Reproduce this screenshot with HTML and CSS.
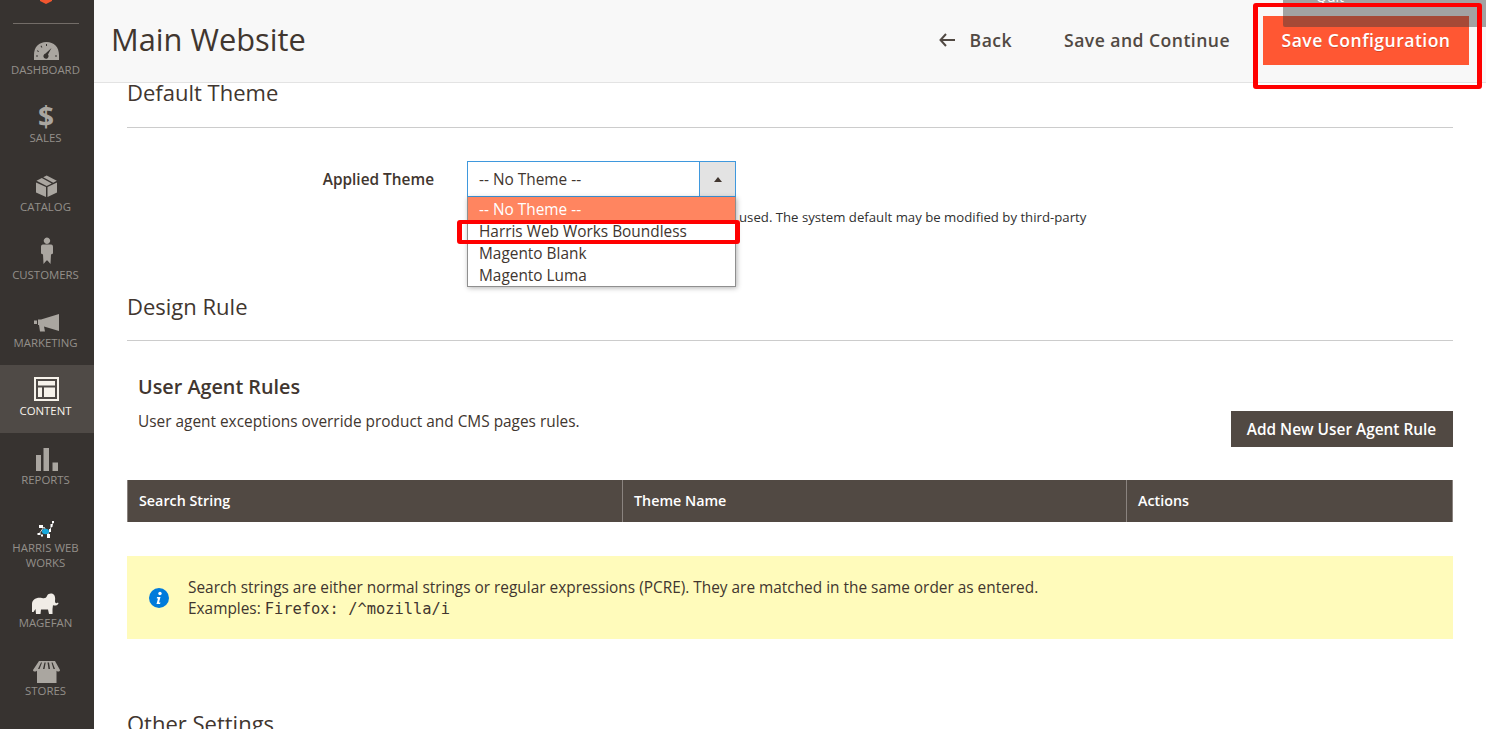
FILE: index.html
```html
<!DOCTYPE html>
<html lang="en">
<head>
<meta charset="utf-8">
<title>Main Website</title>
<link rel="stylesheet" href="styles.css">
</head>
<body>
<div class="app">
  <nav class="sidebar">
    <div class="logo-area">
      <svg class="logo" viewBox="0 0 12 4" width="12" height="4"><path d="M0 0H12V1L6 4L0 1Z" fill="#f1562f"/></svg>
    </div>
    <a class="nav-item">
      <svg class="nav-icon" viewBox="0 0 30 30"><path fill-rule="evenodd" d="M3 29V24C3 16 8 11 15.5 11S28 16 28 24V29ZM20.5 17L17 23.5A2.6 2.6 0 1 1 14.5 22.6ZM15 13V15H16V13ZM9.5 15L10.6 16.7L11.4 16.2L10.3 14.5ZM5.8 20L7.5 21L8 20.2L6.3 19.2ZM5 24.5V25.5H7V24.5ZM24 24.5V25.5H26V24.5Z"/></svg>
      <span>DASHBOARD</span>
    </a>
    <a class="nav-item">
      <svg class="nav-icon" viewBox="0 0 30 30"><text x="15" y="28" text-anchor="middle" class="dollar">$</text></svg>
      <span>SALES</span>
    </a>
    <a class="nav-item">
      <svg class="nav-icon" viewBox="0 0 30 30"><path d="M15 19V29L5 24.500V14.500ZM16.500 19L26 14.500V24.500L16.500 29ZM5.500 12.800L10.800 10L20.800 15.400L15.700 18ZM12.200 9.300L15.700 7.500L25.800 12.800L22.200 14.700Z"/></svg>
      <span>CATALOG</span>
    </a>
    <a class="nav-item">
      <svg class="nav-icon" viewBox="0 0 30 30"><path d="M16 1.500A3.200 3.200 0 1 1 15.900 1.500ZM12 8.500H20C21.500 8.500 22 9.500 22 11V17.500L20 18.500L19.500 28L16.500 24.500L15.500 24.500L12.500 28L12 18.500L10 17.500V11C10 9.500 10.500 8.500 12 8.500Z"/></svg>
      <span>CUSTOMERS</span>
    </a>
    <a class="nav-item">
      <svg class="nav-icon" viewBox="0 0 30 30"><path d="M28 10V27L13 22.500L14 27.500H9L8 21H7V15.500H10ZM3 16.500H6V20H3Z"/></svg>
      <span>MARKETING</span>
    </a>
    <a class="nav-item nav-item-active">
      <svg class="nav-icon" viewBox="0 0 30 30"><path fill-rule="evenodd" d="M3 5H28V29H3ZM5 7V27H26V7ZM7 9H24V13.500H7ZM7 15.500H11V25H7ZM13 15.500H24V25H13Z"/></svg>
      <span>CONTENT</span>
    </a>
    <a class="nav-item">
      <svg class="nav-icon" viewBox="0 0 30 30"><path d="M5 14H10V30H5ZM12.500 7H18V30H12.500ZM21.500 21.500H27V30H21.500Z"/></svg>
      <span>REPORTS</span>
    </a>
    <a class="nav-item nav-item-tall">
      <svg class="nav-icon" viewBox="0 0 30 30"><path class="hw-line" d="M8 25L13 18L17 25L22 14"/><ellipse class="hw-blue" cx="14.500" cy="22.500" rx="3.500" ry="2.800"/><path class="hw-white" d="M21 12h2v2h-2zM19.500 15h2v3h-2zM8 16h4v3H8zM6.500 24h3v2h-3zM10 25.500h2v2h-2zM16 25h3v4h-3zM18 20h2v3h-2z"/></svg>
      <span>HARRIS WEB WORKS</span>
    </a>
    <a class="nav-item nav-item-short">
      <svg class="nav-icon nav-icon-bright" viewBox="0 0 30 30"><path d="M1 20C1 16 5 13 11 14C14 14.500 15 14 16 12C17 9.500 20 9 22 10C24 11 24.500 14 24 17C24 19 25 20 27 18.500L27.500 19.500C26 22 22.500 22 22 21L21.500 25V30H18L17 25.500H10L9.500 30H5L4.500 25L2.500 28H1Z"/></svg>
      <span>MAGEFAN</span>
    </a>
    <a class="nav-item">
      <svg class="nav-icon" viewBox="0 0 30 30"><path fill-rule="evenodd" d="M8 9H24L29 18C29 20 26 20 25.500 18.500V31H6V18.500C5.500 20 2 20 2 18ZM10 10.500L7 17H8.500L11 10.500ZM13.500 10.500L12 17H13.500L14.700 10.500ZM16.500 10.500L17.500 17H19L18 10.500ZM20.500 10.500L22.500 17H24L21.500 10.500Z"/></svg>
      <span>STORES</span>
    </a>
    <a class="nav-item">
      <svg class="nav-icon" viewBox="0 0 30 30"><circle cx="15" cy="20" r="8"/></svg>
      <span>SYSTEM</span>
    </a>
  </nav>

  <div class="main">
    <header class="page-header">
      <h1 class="page-title">Main Website</h1>
      <div class="page-actions">
        <a class="action-link">
          <svg class="back-arrow" viewBox="0 0 16 14" width="16" height="14"><path d="M7 1L1.500 7L7 13M2 7H16" fill="none" stroke="#514943" stroke-width="2"/></svg>
          <span>Back</span>
        </a>
        <a class="action-link">Save and Continue</a>
        <button class="primary-btn">Save Configuration</button>
      </div>
    </header>

    <main class="content">
      <section class="section section-theme">
        <h2 class="section-title">Default Theme</h2>
        <div class="field-row">
          <label class="field-label">Applied Theme</label>
          <div class="field-control">
            <div class="select">
              <div class="select-value">-- No Theme --</div>
              <div class="select-toggle"><i class="caret"></i></div>
            </div>
            <p class="hint">If no value is specified, the system default is used. The system default may be modified by third-party extensions.</p>
            <ul class="select-menu">
              <li class="option-selected">-- No Theme --</li>
              <li>Harris Web Works Boundless</li>
              <li>Magento Blank</li>
              <li>Magento Luma</li>
            </ul>
          </div>
        </div>
      </section>

      <section class="section section-rule">
        <h2 class="section-title">Design Rule</h2>
        <div class="agent-block">
          <div class="agent-head">
            <div>
              <h3 class="agent-title">User Agent Rules</h3>
              <p class="agent-desc">User agent exceptions override product and CMS pages rules.</p>
            </div>
            <button class="dark-btn">Add New User Agent Rule</button>
          </div>
        </div>
        <div class="table-head">
          <div class="cell cell-1">Search String</div>
          <div class="cell cell-2">Theme Name</div>
          <div class="cell cell-3">Actions</div>
        </div>
        <div class="notice">
          <svg class="notice-icon" viewBox="0 0 20 20" width="20" height="20"><circle cx="10" cy="10" r="10" fill="#007bdb"/><circle cx="11" cy="5.500" r="1.700" fill="#fff"/><path d="M8 9H11.500L10 14.500L11.500 14.500L11 16H7.500L9 10.500H7.800Z" fill="#fff"/></svg>
          <div class="notice-text">
            <div>Search strings are either normal strings or regular expressions (PCRE). They are matched in the same order as entered.</div>
            <div>Examples: <code>Firefox: /^mozilla/i</code></div>
          </div>
        </div>
      </section>

      <h2 class="section-title section-other">Other Settings</h2>
    </main>
  </div>
</div>

<div class="quit-overlay"><span>Quit</span></div>
<div class="mark mark-save"></div>
<div class="mark mark-option"></div>
</body>
</html>
```
FILE: styles.css
```css
* { box-sizing: border-box; }
html, body { margin: 0; height: 729px; overflow: hidden; }
body { font-family: "Open Sans", sans-serif; color: #41362f; background: #fff; position: relative; }

.app { display: flex; height: 729px; overflow: hidden; }

.sidebar { width: 94px; flex: none; background: #373330; height: 729px; overflow: hidden; display: flex; flex-direction: column; }
.logo-area { height: 23.25px; flex: none; position: relative; display: flex; justify-content: center; align-items: flex-start; }
.logo-area::after { content: ""; position: absolute; left: 13px; right: 15px; bottom: -1px; height: 1px; background: #736d68; }
.logo { display: block; margin-right: 2px; }
.nav-item { height: 68.25px; flex: none; display: flex; flex-direction: column; align-items: center; justify-content: flex-end; padding: 0 3px 14px 0; color: #aaa6a0; font-size: 11.4px; line-height: 14.5px; text-align: center; }
.nav-item span { display: block; width: 70px; opacity: .8; }
.nav-item-tall { height: 83px; }
.nav-item-short { height: 60.5px; }
.nav-item-active { background: #4f4a46; color: #f7f3eb; }
.nav-item-active span { opacity: 1; }
.nav-icon { width: 30px; height: 30px; display: block; margin-bottom: 2px; flex: none; fill: #aaa6a0; overflow: visible; }
.nav-item-active .nav-icon { fill: #f7f3eb; }
.nav-icon-bright { fill: #f0ece6; }
.dollar { font-family: "Open Sans", sans-serif; font-weight: 700; font-size: 28px; }
.hw-line { fill: none; stroke: #d7d7d7; stroke-width: 1; }
.hw-blue { fill: #17a9dd; }
.hw-white { fill: #fff; }

.main { flex: 1; min-width: 0; display: flex; flex-direction: column; height: 729px; overflow: hidden; }
.page-header { height: 83px; flex: none; background: #f8f8f8; border-bottom: 1px solid #e3e3e3; display: flex; align-items: center; justify-content: space-between; padding: 0 17px 3px 17px; }
.page-title { margin: 0 0 1px; font-size: 30.8px; font-weight: 400; color: #41362f; line-height: 40px; }
.page-actions { display: flex; align-items: center; }
.action-link { display: flex; align-items: center; gap: 15px; font-size: 17.6px; font-weight: 600; letter-spacing: .45px; color: #514943; margin-right: 52px; }
.action-link:nth-child(2) { margin-right: 33px; }
.back-arrow { display: block; }
.primary-btn { width: 206px; height: 49px; margin-top: 2px; border: 0; padding: 0 0 1px; background: #ff5733; color: #fff; font: 600 17.6px "Open Sans", sans-serif; letter-spacing: .45px; text-shadow: 0 1px 0 rgba(0,0,0,.2); }

.content { flex: 1; padding: 0 33.5px 0 33px; min-height: 0; }
.section-title { margin: 0; font-size: 22px; font-weight: 400; line-height: 18px; color: #41362f; }
.section-theme .section-title { padding-bottom: 26px; border-bottom: 1px solid #ccc; }
.section-theme { height: 214px; }
.section-rule .section-title { padding-bottom: 25px; border-bottom: 1px solid #ccc; }
.field-row { display: flex; margin-top: 33px; }
.field-label { width: 307px; text-align: right; font-size: 15.4px; font-weight: 600; line-height: 38px; color: #41362f; flex: none; }
.field-control { margin-left: 33px; width: 625px; position: relative; }
.select { width: 269px; height: 36px; display: flex; border: 1px solid #3f98dd; background: #fff; }
.select-value { flex: 1; padding-left: 11px; font-size: 15.4px; line-height: 36px; color: #41362f; }
.select-toggle { width: 36px; border-left: 1px solid #3f98dd; background: #e3e3e3; display: flex; align-items: center; justify-content: center; }
.caret { width: 0; height: 0; border-left: 4.500px solid transparent; border-right: 4.500px solid transparent; border-bottom: 5px solid #41362f; }
.hint { margin: 11px 0 0; font-size: 13.2px; line-height: 18px; color: #303030; }
.select-menu { list-style: none; margin: 0; padding: 0; position: absolute; top: 36px; left: 0; width: 269px; background: #fff; border: 1px solid #8f8f8f; border-top: 0; box-shadow: 1px 1px 5px rgba(0,0,0,.3); font-size: 15.4px; color: #41362f; }
.select-menu li { height: 22px; line-height: 24px; padding-left: 11px; white-space: nowrap; }
.select-menu .option-selected { height: 23px; line-height: 26px; background: #ff8560; color: #fff; }

.agent-block { padding: 32px 0 0 11px; }
.agent-head { display: flex; justify-content: space-between; align-items: flex-end; }
.agent-title { margin: 0; font-size: 19.8px; font-weight: 600; line-height: 28px; color: #41362f; }
.agent-desc { margin: 11px 0 0; font-size: 15.4px; line-height: 20px; color: #41362f; padding-bottom: 15px; }
.dark-btn { width: 222px; height: 36px; border: 0; padding: 0; background: #514943; color: #fff; font: 600 15.4px "Open Sans", sans-serif; }
.table-head { display: flex; height: 42px; margin-top: 33px; background: #514943; border: 1px solid #8a837f; border-width: 0 1px; }
.cell { font-size: 14.3px; font-weight: 600; color: #fff; line-height: 42px; padding-left: 11px; border-right: 1px solid #8a837f; }
.cell-1 { width: 495px; }
.cell-2 { width: 504px; }
.cell-3 { flex: 1; border-right: 0; }
.notice { display: flex; align-items: center; height: 83px; margin-top: 34px; background: #fffbbb; padding-left: 22px; }
.notice-icon { flex: none; margin-right: 19px; }
.notice-text { padding-top: 2px; font-size: 15.4px; line-height: 21px; color: #41362f; }
code { font-family: "DejaVu Sans Mono", monospace; font-size: 15.4px; }
.section-other { margin-top: 75px; }

.quit-overlay { position: absolute; top: 0; left: 1283px; width: 203px; height: 27px; background: rgba(58,58,58,.45); border-bottom-left-radius: 2px; overflow: hidden; }
.quit-overlay span { position: absolute; left: 33px; top: -12px; font-size: 14px; line-height: 18px; color: #fff; }
.mark { position: absolute; border-style: solid; border-color: #f00; border-width: 4px 5px; border-radius: 3px; }
.mark-save { left: 1253px; top: 3px; width: 229px; height: 86px; }
.mark-option { left: 457px; top: 220px; width: 283px; height: 24px; }
```
